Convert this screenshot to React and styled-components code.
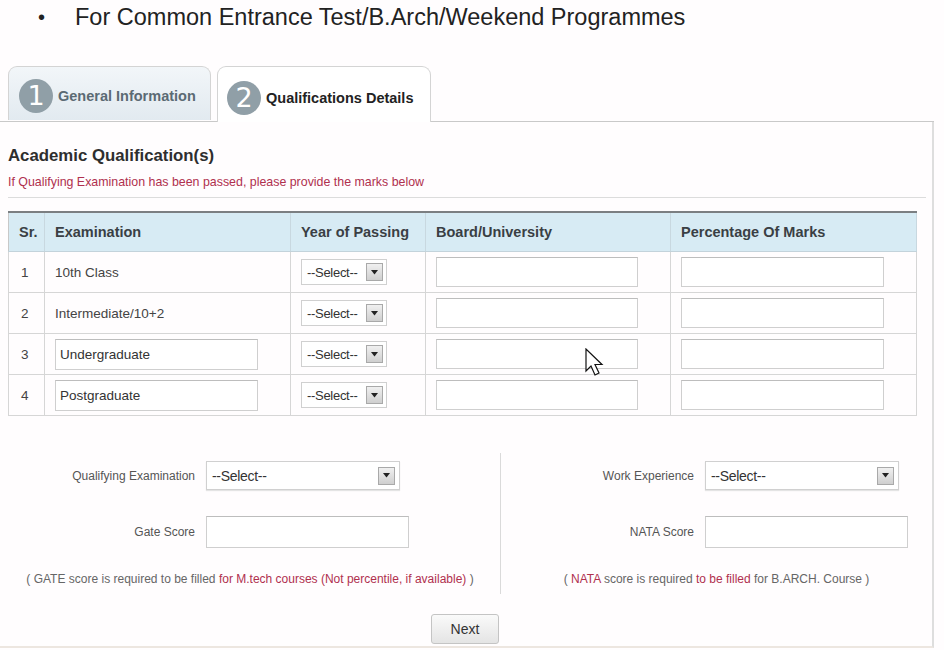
import React from 'react';
import styled, { createGlobalStyle } from 'styled-components';

const GlobalStyle = createGlobalStyle`
  body {
    margin: 0;
    background: #fff;
    font-family: "Liberation Sans", Arial, sans-serif;
  }
`;

const Page = styled.div`
  position: relative;
  width: 944px;
  height: 650px;
  overflow: hidden;
  background: #fffdfe;
`;

const Headline = styled.div`
  display: flex;
  align-items: center;
  height: 34px;
  padding-left: 38px;
  font-size: 23.5px;
  color: #222;
`;

const Bullet = styled.span`
  width: 37px;
  font-size: 20px;
`;

const TabRow = styled.div`
  display: flex;
  gap: 6px;
  margin-top: 32px;
  padding-left: 8px;
  width: 926px;
  border-bottom: 1px solid #c9c9c9;
`;

const Tab = styled.div`
  display: flex;
  align-items: center;
  gap: 5px;
  width: ${p => p.w}px;
  box-sizing: border-box;
  padding-left: ${p => p.active ? 9 : 10}px;
  padding-top: ${p => p.active ? 6 : 4}px;
  border: 1px solid #d4d4d4;
  border-bottom: none;
  border-radius: 9px 9px 0 0;
  background: ${p => p.active
    ? '#ffffff'
    : 'linear-gradient(#f2f6f9, #e2eaf0)'};
  margin-bottom: ${p => p.active ? '-1px' : '0'};
  height: ${p => p.active ? 56 : 54}px;
`;

const StepCircle = styled.div`
  width: 34px;
  height: 34px;
  border-radius: 50%;
  background: #909fa7;
  color: #fff;
  display: flex;
  align-items: center;
  justify-content: center;
  font-size: 27px;
  font-family: "DejaVu Sans", sans-serif;
`;

const TabLabel = styled.span`
  font-size: 14.5px;
  font-weight: bold;
  color: ${p => p.active ? '#222' : '#5b6a73'};
`;

const Panel = styled.div`
  width: 934px;
  height: 526px;
  box-sizing: border-box;
  border-right: 2px solid #dedede;
  border-bottom: 2px solid #ede6e0;
  padding: 24px 0 0 8px;
`;

const SectionTitle = styled.h2`
  margin: 0;
  font-size: 16.8px;
  font-weight: bold;
  color: #2e2e2e;
  line-height: 20px;
`;

const Hint = styled.div`
  font-size: 12.4px;
  color: #b0304e;
  margin-top: 9px;
  padding-bottom: 8px;
  width: 918px;
  border-bottom: 1px solid #dcdcdc;
`;

const Table = styled.table`
  margin-top: 13px;
  width: 908px;
  border-collapse: collapse;
  border: 1px solid #c8c8c8;
  border-top: 2px solid #7b7f82;
  table-layout: fixed;
`;

const Th = styled.th`
  height: 38px;
  text-align: left;
  padding: 0 0 0 ${p => p.pl || 10}px;
  font-size: 14.5px;
  font-weight: bold;
  color: #3a3f44;
  background: #d7ebf4;
  border-right: 1px solid #c8d8e0;
  border-bottom: 1px solid #c3d3db;
`;

const Td = styled.td`
  height: 40px;
  padding: 0 0 0 ${p => p.pl || 10}px;
  font-size: 13.5px;
  color: #444;
  border: 1px solid #d6d6d6;
`;

const TextBox = styled.div`
  width: ${p => p.w || 202}px;
  height: ${p => p.h || 30}px;
  box-sizing: border-box;
  border: 1px solid #cfcfcf;
  border-top-color: #bdbdbd;
  background: #fff;
  font-size: 13.5px;
  color: #333;
  display: flex;
  align-items: center;
  padding-left: 4px;
`;

const SmallSelect = styled.div`
  width: 86px;
  height: 26px;
  box-sizing: border-box;
  border: 1px solid #d0d0d0;
  background: #fff;
  display: flex;
  align-items: center;
  justify-content: space-between;
  padding: 0 3px 0 5px;
  font-size: 13px;
  color: #333;
  letter-spacing: -0.3px;
`;

const ArrowBtn = styled.span`
  width: 17px;
  height: 18px;
  box-sizing: border-box;
  border: 1px solid #a9a9a9;
  background: linear-gradient(#f0f0f0, #cfcfcf);
  display: flex;
  align-items: center;
  justify-content: center;
`;

const Lower = styled.div`
  display: grid;
  grid-template-columns: 500px 1fr;
  margin-top: 37px;
  margin-left: -8px;
`;

const Column = styled.div`
  border-left: ${p => p.divider ? '1px solid #dadada' : 'none'};
  padding-top: 8px;
  height: 133px;
`;

const FieldRow = styled.div`
  display: grid;
  grid-template-columns: ${p => p.lw}px ${p => p.cw}px;
  column-gap: 11px;
  align-items: center;
  height: ${p => p.h}px;
  margin-bottom: ${p => p.mb || 0}px;
`;

const FieldLabel = styled.span`
  text-align: right;
  font-size: 12px;
  color: #555;
`;

const WideSelect = styled.div`
  width: 194px;
  height: 29px;
  box-sizing: border-box;
  border: 1px solid #d0d0d0;
  box-shadow: 0 1px 1px #e4e4e4;
  background: #fff;
  display: flex;
  align-items: center;
  justify-content: space-between;
  padding: 0 4px 0 5px;
  font-size: 14px;
  color: #333;
  letter-spacing: -0.3px;
`;

const Note = styled.div`
  font-size: 12px;
  color: #666;
  text-align: center;
  margin-top: 24px;
  padding-right: ${p => p.pr || 0}px;
  span { color: #b0304e; }
`;

const ButtonRow = styled.div`
  display: flex;
  justify-content: center;
  margin-top: 20px;
  margin-left: -10px;
`;

const NextButton = styled.button`
  width: 68px;
  height: 30px;
  border: 1px solid #c4c4c4;
  border-radius: 3px;
  background: linear-gradient(#fafafa, #e4e4e4);
  font-family: "Liberation Sans", Arial, sans-serif;
  font-size: 14px;
  color: #333;
`;

const Cursor = styled.svg`
  position: absolute;
  left: 585px;
  top: 348px;
`;

const Arrow = () => (
  <ArrowBtn>
    <svg width="7" height="5" viewBox="0 0 7 5"><path d="M0 0h7L3.5 4.5z" fill="#222" /></svg>
  </ArrowBtn>
);

const rows = [
  { sr: 1, exam: '10th Class' },
  { sr: 2, exam: 'Intermediate/10+2' },
  { sr: 3, exam: 'Undergraduate', box: true },
  { sr: 4, exam: 'Postgraduate', box: true },
];

export default function App() {
  return (
    <Page>
      <GlobalStyle />
      <Headline>
        <Bullet>•</Bullet>
        For Common Entrance Test/B.Arch/Weekend Programmes
      </Headline>
      <TabRow>
        <Tab w={203}>
          <StepCircle>1</StepCircle>
          <TabLabel>General Information</TabLabel>
        </Tab>
        <Tab w={214} active>
          <StepCircle>2</StepCircle>
          <TabLabel active>Qualifications Details</TabLabel>
        </Tab>
      </TabRow>
      <Panel>
        <SectionTitle>Academic Qualification(s)</SectionTitle>
        <Hint>If Qualifying Examination has been passed, please provide the marks below</Hint>
        <Table>
          <colgroup>
            <col style={{ width: 36 }} />
            <col style={{ width: 246 }} />
            <col style={{ width: 135 }} />
            <col style={{ width: 245 }} />
            <col style={{ width: 246 }} />
          </colgroup>
          <thead>
            <tr>
              <Th pl={10}>Sr.</Th>
              <Th>Examination</Th>
              <Th>Year of Passing</Th>
              <Th>Board/University</Th>
              <Th>Percentage Of Marks</Th>
            </tr>
          </thead>
          <tbody>
            {rows.map(r => (
              <tr key={r.sr}>
                <Td pl={12}>{r.sr}</Td>
                <Td>{r.box ? <TextBox w={203} h={31}>{r.exam}</TextBox> : r.exam}</Td>
                <Td>
                  <SmallSelect>--Select--<Arrow /></SmallSelect>
                </Td>
                <Td><TextBox /></Td>
                <Td><TextBox w={203} /></Td>
              </tr>
            ))}
          </tbody>
        </Table>
        <Lower>
          <Column>
            <FieldRow lw={195} cw={194} h={29} mb={26}>
              <FieldLabel>Qualifying Examination</FieldLabel>
              <WideSelect>--Select--<Arrow /></WideSelect>
            </FieldRow>
            <FieldRow lw={195} cw={203} h={32}>
              <FieldLabel>Gate Score</FieldLabel>
              <TextBox w={203} h={32} />
            </FieldRow>
            <Note pr={0}>( GATE score is required to be filled <span>for M.tech courses (Not percentile, if available)</span> )</Note>
          </Column>
          <Column divider>
            <FieldRow lw={193} cw={194} h={29} mb={26}>
              <FieldLabel>Work Experience</FieldLabel>
              <WideSelect>--Select--<Arrow /></WideSelect>
            </FieldRow>
            <FieldRow lw={193} cw={203} h={32}>
              <FieldLabel>NATA Score</FieldLabel>
              <TextBox w={203} h={32} />
            </FieldRow>
            <Note pr={0}>( <span>NATA</span> score is required <span>to be filled</span> for B.ARCH. Course )</Note>
          </Column>
        </Lower>
        <ButtonRow>
          <NextButton>Next</NextButton>
        </ButtonRow>
      </Panel>
      <Cursor width="20" height="32" viewBox="0 0 20 32">
        <path d="M1 1v22l5-5 4 9 4-2-4-8.5h7z" fill="#fff" stroke="#111" strokeWidth="1.2" strokeLinejoin="miter" />
      </Cursor>
    </Page>
  );
}
